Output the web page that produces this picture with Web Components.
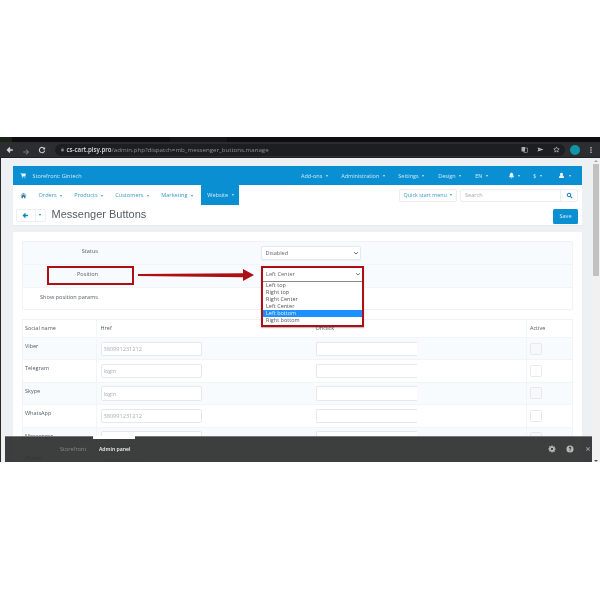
<!DOCTYPE html>
<html lang="en"><head><meta charset="utf-8"><title>Messenger Buttons</title>
<style>
html,body{margin:0;padding:0;background:#fff;width:600px;height:600px;overflow:hidden;font-family:"Open Sans","Liberation Sans",sans-serif}
x-shot{margin-top:137px}
</style></head><body>
<x-shot>
  <x-browser-bar slot="top" host-name="cs-cart.plsy.pro" path="/admin.php?dispatch=mb_messenger_buttons.manage"></x-browser-bar>
  <x-admin-header></x-admin-header>
  <x-admin-nav></x-admin-nav>
  <x-title-bar heading="Messenger Buttons"></x-title-bar>
  <x-card>
    <x-settings-table></x-settings-table>
    <x-messenger-table></x-messenger-table>
  </x-card>
  <x-callouts slot="over"></x-callouts>
  <x-bottom-bar slot="over"></x-bottom-bar>
</x-shot>
<script>
const icons={
 cart:'<path fill="currentColor" d="M1 2h2l.5 1.2H12l-1.3 4.6H4.6L5 9h6v1H4L2.4 3H1zM5 10.6a1 1 0 1 1 0 2 1 1 0 0 1 0-2zm5 0a1 1 0 1 1 0 2 1 1 0 0 1 0-2z"/>',
 home:'<path fill="currentColor" d="M7 1.5l6 5.3-.7.8L7 3 1.7 7.6 1 6.800zM3 8l4-3.500L11 8v4.500H8.300V9.500H5.700v3H3z"/>',
 bell:'<path fill="currentColor" d="M7 1a1 1 0 0 1 1 1c2 .5 2.500 2 2.500 4 0 2.500 1.500 3.500 1.500 4.500H2C2 9.500 3.500 8.500 3.500 6c0-2 .5-3.500 2.500-4a1 1 0 0 1 1-1zM5.500 11.500h3a1.500 1.500 0 0 1-3 0z"/>',
 user:'<path fill="currentColor" d="M7 1.500a3 3 0 0 1 2 5.300c2 .6 3 2.200 3 5.200H2c0-3 1-4.600 3-5.200a3 3 0 0 1 2-5.300z"/>',
 search:'<circle cx="6" cy="6" r="3.600" fill="none" stroke="currentColor" stroke-width="2"/><path d="M8.800 8.800l3.400 3.400" stroke="currentColor" stroke-width="2.200" fill="none"/>',
 left:'<path d="M12 7H3M7 2.800L2.800 7 7 11.200" fill="none" stroke="currentColor" stroke-width="2.600"/>',
 right:'<path d="M2 7h9M7 2.800L11.200 7 7 11.200" fill="none" stroke="currentColor" stroke-width="1.800"/>',
 reload:'<path d="M11.300 5A4.700 4.700 0 1 0 11.700 8" fill="none" stroke="currentColor" stroke-width="1.800"/><path fill="currentColor" d="M12.500 1.800v4.400H8.100z"/>',
 lock:'<rect x="3.500" y="6" width="7" height="6" fill="currentColor"/><path d="M5 6V4.500a2 2 0 0 1 4 0V6" fill="none" stroke="currentColor" stroke-width="1.200"/>',
 translate:'<rect x="1" y="2" width="7" height="9" fill="currentColor" opacity=".8"/><rect x="6" y="4" width="7" height="9" fill="none" stroke="currentColor"/>',
 send:'<path fill="currentColor" d="M1 3l12 4-12 4 2-4zM4.500 6.300v1.400L9 7z"/>',
 star:'<path fill="none" stroke="currentColor" stroke-width="1.300" d="M7 1.800l1.600 3.500 3.800.4-2.800 2.600.8 3.800L7 10.200l-3.400 1.900.8-3.800-2.800-2.600 3.800-.4z"/>',
 gear:'<path fill="currentColor" fill-rule="evenodd" d="M6 1h2l.3 1.500 1.200.5 1.300-.8 1.400 1.400-.8 1.300.5 1.200L13.400 6v2l-1.500.3-.5 1.200.8 1.300-1.400 1.400-1.300-.8-1.200.5L8 13H6l-.3-1.500-1.200-.5-1.300.8-1.400-1.400.8-1.300-.5-1.200L.6 8V6l1.500-.3.5-1.200-.8-1.300 1.400-1.400 1.300.8 1.200-.5zM7 5a2 2 0 1 0 0 4 2 2 0 0 0 0-4z"/>',
 help:'<path fill="currentColor" fill-rule="evenodd" d="M7 .8a6.200 6.200 0 1 1 0 12.400A6.200 6.200 0 0 1 7 .8zM4.800 5.500h1.700c0-.5.2-.9.6-.9s.6.300.6.600c0 .7-1.400 1-1.400 2.600v.3h1.500c0-1.200 1.700-1.400 1.700-3 0-1.200-1-2-2.400-2-1.500 0-2.300 1-2.300 2.400zM6.300 9.300v1.500h1.500V9.300z"/>',
 close:'<path d="M3 3l8 8M11 3l-8 8" stroke="currentColor" stroke-width="2.400" fill="none"/>',
 kebab:'<circle cx="7" cy="3" r="1.300" fill="currentColor"/><circle cx="7" cy="7" r="1.300" fill="currentColor"/><circle cx="7" cy="11" r="1.300" fill="currentColor"/>',
 chev:'<path d="M2.500 5l4.500 4.500L11.500 5" fill="none" stroke="currentColor" stroke-width="2"/>'
};
const ic=(n,s=8)=>`<svg width="${s}" height="${s}" viewBox="0 0 14 14" aria-hidden="true">${icons[n]}</svg>`;
const caret='<i style="display:inline-block;border:1.500px solid transparent;border-top:2px solid currentColor;border-bottom:0;margin-left:3.500px;vertical-align:middle"></i>';
function def(name,css,html){
  customElements.define(name,class extends HTMLElement{
    constructor(){super();this.attachShadow({mode:'open'})}
    connectedCallback(){this.shadowRoot.innerHTML=`<style>${css}</style>`+(typeof html==='function'?html(this):html)}
  });
}
def('x-shot',`
 :host{display:block;position:relative;width:600px;height:325px;overflow:hidden;background:#eef1f4;filter:blur(.4px)}
 .body{display:grid;grid-template-columns:1fr 8px;height:305px;border-left:1.500px solid #2d2a26;box-sizing:border-box}
 .main{padding:8px 10px 0 11.500px;overflow:hidden;min-width:0}
 .sb{background:#f1f1f1;display:flex;flex-direction:column;align-items:center}
 .sb b{display:block;width:6px;height:112px;background:#c1c1c1;margin-top:2px}
 .sb i{display:block;border:2px solid transparent;border-bottom:2px solid #a3a3a3;border-top:0;margin-top:2px}
 .sb i.d{border-bottom:0;border-top:2px solid #555;margin-top:auto;margin-bottom:1px}
`,`<slot name="top"></slot><div class="body"><div class="main"><slot></slot></div><div class="sb"><i></i><b></b><i class="d"></i></div></div><slot name="over"></slot>`);

def('x-browser-bar',`
 :host{display:block;background:#0e0e0f}
 .tabs{height:5px;position:relative}
 .tabs::before{content:"";position:absolute;left:0;top:0;bottom:0;width:12px;background:#1a2318}
 .tabs::after{content:"";position:absolute;left:170px;width:57px;top:0;bottom:0;background:#161618}
 .tb{height:15px;background:#2c2d30;display:flex;align-items:center;padding-left:6px;padding-right:5px;color:#d7d8da;border-bottom:.5px solid #222}
 .nav{display:flex;gap:8px;align-items:center;margin-right:9px}
 .nav .off{color:#74767a}
 .omni{flex:1;height:12px;background:#1d1e21;border-radius:6px;display:flex;align-items:center;padding:0 5px 0 5px;font:6.150px "Open Sans",sans-serif;color:#8c8e92;white-space:nowrap;min-width:0}
 .omni b{color:#dcdde0;font-weight:600;margin-left:1.500px}
 .r{margin-left:auto;display:flex;gap:9px;align-items:center;color:#c9cacd}
 .av{width:10px;height:10px;border-radius:50%;background:#0f95a8;display:block;margin:0 7px 0 5px;flex:none}
 .k{color:#ddd;display:flex}
`,h=>`<div class="tabs"></div><div class="tb"><div class="nav">${ic('left',8)}<span class="off">${ic('right',8)}</span>${ic('reload',8)}</div>
 <div class="omni">${ic('lock',5)}<b>${h.getAttribute('host-name')}</b><span>${h.getAttribute('path')}</span><span class="r">${ic('translate',7)}${ic('send',7)}${ic('star',7)}</span></div>
 <span class="av"></span><span class="k">${ic('kebab',8)}</span></div>`);

def('x-admin-header',`
 :host{display:flex;align-items:center;height:19px;background:#0a8fd3;color:#cfe8f6;font:5.500px "Open Sans",sans-serif;white-space:nowrap}
 .cart{margin:0 6px 0 7px;display:flex}
 .store{flex:1}
 .m{display:flex;align-items:center}
 .m span{display:inline-flex;align-items:center}
 svg{color:#e8f5fc}
`,`<span class="cart">${ic('cart',7)}</span><span class="store">Storefront: Gintech</span>
 <div class="m">
 <span style="margin-right:13.500px">Add-ons${caret}</span><span style="margin-right:13.500px">Administration${caret}</span><span style="margin-right:14px">Settings${caret}</span><span style="margin-right:14px">Design${caret}</span><span style="margin-right:20px">EN${caret}</span><span style="margin-right:13px">${ic('bell',7)}${caret}</span><span style="margin-right:16px">$${caret}</span><span style="margin-right:11.500px">${ic('user',7)}${caret}</span></div>`);

def('x-admin-nav',`
 :host{display:flex;align-items:center;height:20px;background:#fff;color:#3a97cb;font:5.600px "Open Sans",sans-serif;white-space:nowrap}
 .home{margin:0 12px 0 7px;display:flex;color:#2a6f9c}
 .i{margin-right:12.200px}
 .a{align-self:stretch;display:flex;align-items:center;background:#0a8fd3;color:#d5ecf8;padding:0 5px 0 6px;margin-left:-4px}
 .q{margin-left:auto;height:13px;border:1px solid #eceef1;border-radius:2px;display:flex;align-items:center;box-sizing:border-box;width:58px;justify-content:center;white-space:nowrap;font-size:5.400px}
 .s{margin:0 4px 0 3px;height:13px;width:118px;box-sizing:border-box;border:1px solid #eceef1;display:flex;align-items:center;color:#a6aab0;border-radius:2px}
 .s span{flex:1;padding-left:4px}
 .s i{width:16px;height:100%;border-left:1px solid #eceef1;display:flex;align-items:center;justify-content:center;color:#0a80bf}
`,`<span class="home">${ic('home',7)}</span><span class="i">Orders${caret}</span><span class="i">Products${caret}</span><span class="i">Customers${caret}</span><span class="i">Marketing${caret}</span><span class="a">Website${caret}</span>
 <span class="q">Quick start menu${caret}</span><div class="s"><span>Search</span><i>${ic('search',7)}</i></div>`);

def('x-title-bar',`
 :host{display:flex;align-items:center;height:20px;background:#fff;color:#565c62;white-space:nowrap;margin-bottom:7px;padding:0 4px 0 3px;box-shadow:0 1px 1px #e8ebee}
 .g{display:flex;height:13px;border:1px solid #eceef1;border-radius:2px;box-sizing:border-box;color:#0a80bf;margin-right:6px;width:30px}
 .g span{display:flex;align-items:center;justify-content:center}
 .g span:first-child{width:18px;border-right:1px solid #eceef1}
 .g span:last-child{flex:1}
 h1{font:400 11px "Liberation Sans",Arial,sans-serif;margin:-2px 0 0;flex:1}
 button{all:unset;background:#0a8fd3;color:#d5ecf8;font:5.600px "Open Sans",sans-serif;width:25px;height:15px;text-align:center;border-radius:1.500px;line-height:15px;margin-top:2px}
`,h=>`<div class="g"><span>${ic('left',7)}</span><span>${caret.replace('margin-left:3.500px','')}</span></div><h1>${h.getAttribute('heading')}</h1><button>Save</button>`);

def('x-card',`:host{display:block;background:#fff;padding:9px 9px 40px;height:260px;box-sizing:border-box}`,`<slot></slot>`);

def('x-settings-table',`
 :host{display:block;outline:1px solid #f0f3f6;outline-offset:-1px;border-radius:2px;font:5.600px "Open Sans",sans-serif;color:#5a6168;height:69px;margin-bottom:9px}
 .r{display:flex;height:23px;align-items:center;box-sizing:border-box}
 .r+.r{border-top:1px solid #f0f5f8}
 .r.t{background:#f7fbfe}
 .l{width:76.500px;text-align:right;flex:none;margin-bottom:4px}
 .c{margin-left:162.500px}
 .sel{width:100.500px;height:14px;border:1px solid #e6e9ec;border-radius:2px;box-sizing:border-box;display:flex;align-items:center;justify-content:space-between;padding:0 1px 0 4px;background:#fff;color:#666;box-shadow:0 .5px 1px #eef0f2}
 .sel svg{color:#555}
`,`<div class="r t"><span class="l">Status</span><div class="c"><div class="sel">Disabled${ic('chev',6)}</div></div></div>
 <div class="r t"><span class="l">Position</span></div>
 <div class="r"><span class="l">Show position params</span></div>`);

def('x-messenger-table',`
 :host{display:block;outline:1px solid #f0f3f6;outline-offset:-1px;font:5.500px "Open Sans",sans-serif;color:#555c63}
 .r{display:grid;grid-template-columns:75.500px 215px 214px 1fr;height:22.400px;box-sizing:border-box;border-top:1px solid #f0f5f8}
 .r.h{border-top:0;height:18px;align-items:center}
 .r.t{background:#f7fbfe}
 .r>*{padding-left:3.500px;box-sizing:border-box;min-width:0}
 .n{padding-top:4px;border-right:1px solid #f0f5f8}
 .h .n,.h .a{padding-top:0;align-self:stretch;display:flex;align-items:center}
 .inp{margin-top:3.500px;width:101px;height:14.500px;background:#fff;border:1px solid #e6e9ec;border-radius:2px;box-sizing:border-box;display:flex;align-items:center;padding-left:2px;color:#a9adb2;font-size:5.600px}
 .on .inp{border-right:0;border-radius:2px 0 0 2px}
 .a{border-left:1px solid #f0f5f8;padding-left:3px!important}
 .cb{display:block;width:12px;height:12px;margin-top:4.500px;border:1px solid #e6e9ec;border-radius:1.500px;box-sizing:border-box;background:#fff}
 .t .cb{background:#f6f8fa}
`,()=>{
 const rows=[['Viber','380991231212'],['Telegram','login'],['Skype','login'],['WhatsApp','380991231212'],['Messenger','login'],['Phone','380991231212']];
 return `<div class="r h"><span class="n">Social name</span><span>Href</span><span>Onclick</span><span class="a">Active</span></div>`+
 rows.map((r,i)=>`<div class="r${i%2?'':' t'}"><span class="n">${r[0]}</span><span><span class="inp">${r[1]}</span></span><span class="on"><span class="inp"></span></span><span class="a"><span class="cb"></span></span></div>`).join('');
});

def('x-callouts',`
 :host{display:block;position:absolute;left:0;top:0;width:600px;height:325px;pointer-events:none;font:5.500px "Open Sans",sans-serif}
 .pos{position:absolute;left:46.500px;top:129px;width:87.500px;height:18.500px;border:2.200px solid #ad0f14;box-sizing:border-box}
 svg.ar{position:absolute;left:137px;top:131px}
 .box{position:absolute;left:260.500px;top:129px;width:103px;height:61px;border:2.200px solid #ad0f14;box-sizing:border-box;background:#fff;box-shadow:0 1px 1px rgba(0,0,0,.25)}
 .head{height:13.500px;display:flex;align-items:center;justify-content:space-between;padding:0 1px 0 3.500px;color:#666;font-size:5.600px;border-bottom:1px solid #8a8a8a;background:#fff;box-sizing:border-box}
 .o{height:7.200px;line-height:7.200px;padding-left:3.500px;color:#555;white-space:nowrap}
 .o.sel{background:#1e90ff;color:#e4f1ff}
`,`<div class="pos"></div>
 <svg class="ar" width="118" height="14" viewBox="0 0 118 14" aria-hidden="true"><path fill="#ad0f14" d="M1 5.900L106 5.300V1L117 7 106 13V9.300L1 8.100z"/></svg>
 <div class="box"><div class="head">Left Center${ic('chev',6)}</div>
 <div class="o">Left top</div><div class="o">Right top</div><div class="o">Right Center</div><div class="o">Left Center</div><div class="o sel">Left bottom</div><div class="o">Right bottom</div></div>`);

def('x-bottom-bar',`
 :host{position:absolute;left:5px;top:299px;width:587px;height:26px;background:rgba(46,47,47,.93);display:flex;align-items:center;box-sizing:border-box;border-top:1px solid #777;color:#cfd0d0;font:5.500px "Open Sans",sans-serif;white-space:nowrap;padding-bottom:2px}
 .mark{position:absolute;left:88px;top:-1px;width:42px;height:2.500px;background:#fff}
 .s{margin-left:55px;color:#85888a}
 .ad{margin-left:12.500px;color:#f2f2f2;font-weight:600;font-size:5.200px}
 .ic{margin-left:auto;display:flex;gap:10.500px;margin-right:1.500px;color:#b9baba;align-items:center}
 .ic svg:last-child{color:#8f9091}
`,`<span class="mark"></span><span class="s">Storefront</span><span class="ad">Admin panel</span><span class="ic">${ic('gear',8)}${ic('help',8)}${ic('close',6)}</span>`);
</script>
</body></html>
